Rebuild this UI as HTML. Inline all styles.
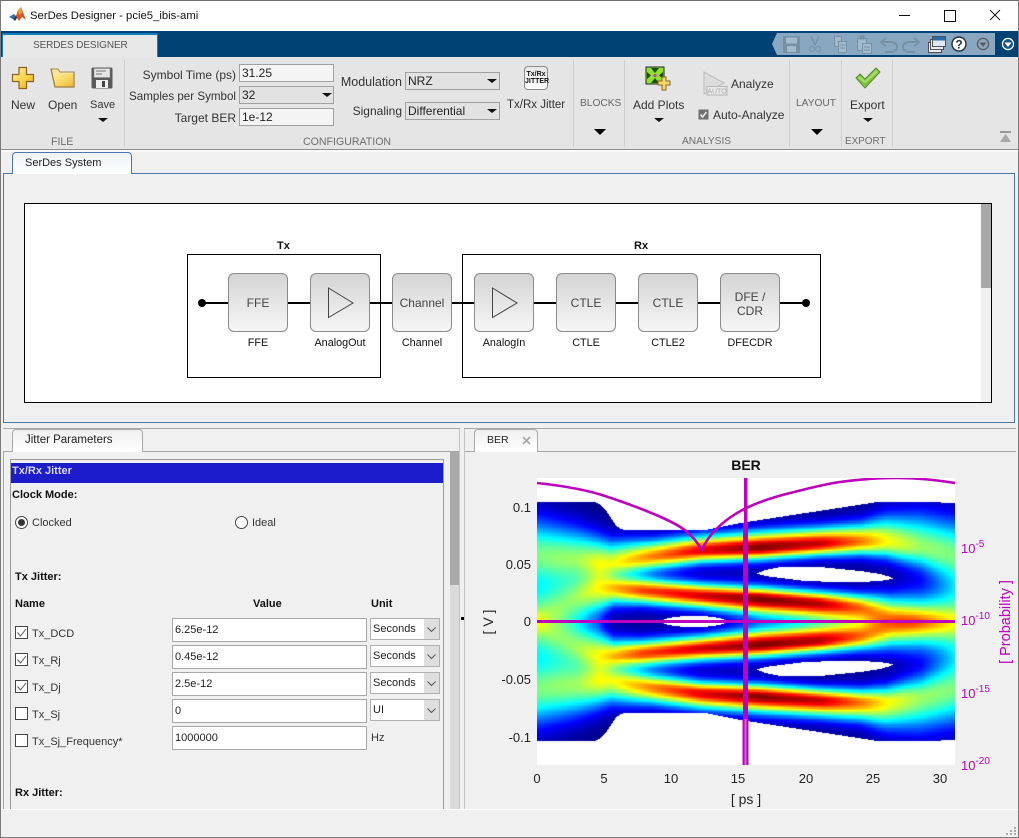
<!DOCTYPE html>
<html><head><meta charset="utf-8"><title>SerDes Designer</title>
<style>
html,body{margin:0;padding:0;background:#f0f0f0}
#w{position:relative;width:1019px;height:838px;overflow:hidden;background:#f0f0f0;font-family:"Liberation Sans",sans-serif;font-size:12px;color:#333}
#w div,#w span.a,#w canvas,#w svg{position:absolute}
.t{position:absolute;white-space:nowrap;line-height:14px}
.r{text-align:right}
.c{text-align:center}
.sep{width:1px;top:60px;height:87px;background:#cfcfcf}
.grp{top:135px;color:#6d6d6d;font-size:10.6px}
.inp{background:#f4f4f4;border:1px solid #a0a0a0;box-sizing:border-box;color:#222;padding-left:2px;line-height:17px}
.cmb{background:#e2e2e2;border:1px solid #a0a0a0;box-sizing:border-box;color:#222;padding-left:2px;line-height:17px}
.ar{width:0;height:0;border-left:5px solid transparent;border-right:5px solid transparent;border-top:4px solid #111}
.ar2{width:0;height:0;border-left:6px solid transparent;border-right:6px solid transparent;border-top:6px solid #000}
.blk{width:60px;height:59px;top:273px;box-sizing:border-box;border:1px solid #8a8a8a;border-radius:6px;background:linear-gradient(#d4d4d4,#f6f6f6);text-align:center;color:#444;font-size:12px;line-height:59px}
.bl{top:336px;width:80px;text-align:center;color:#111;font-size:10.8px}
.fi{left:172px;width:195px;height:24px;background:#fff;border:1px solid #a8a8a8;box-sizing:border-box;font-size:11px;line-height:22px;padding-left:2px;color:#222}
.fs{left:370px;width:70px;height:22px;background:#fff;border:1px solid #b0b0b0;box-sizing:border-box;font-size:11px;line-height:21px;padding-left:2px;color:#222}
.fs i{position:absolute;right:0;top:0;width:15px;height:20px;background:#dedede}
.fs svg{right:3px;top:8px}
.ck{left:15px;width:13px;height:13px;border:1px solid #444;box-sizing:border-box;background:#fff}
.fl{left:32px;font-size:11px;color:#333}
.b{font-weight:bold;font-size:11px;color:#111}
.mag{color:#c000c0;font-size:13px}
.mag sup{font-size:10px;position:relative;top:-6px;vertical-align:baseline;line-height:0;margin-left:0}
.tk{color:#222;font-size:13px}
</style></head><body><div id="w">

<!-- title bar -->
<div style="left:0;top:0;width:1019px;height:31px;background:#fff;border-top:1px solid #6e6e6e;box-sizing:border-box"></div>
<svg style="left:9px;top:7px" width="17" height="16" viewBox="0 0 17 16"><path d="M0 10L5 7 7 9 4 12z" fill="#2a6fa8"/><path d="M4 12L7 9 9 3 12 0 15 8 17 13 13 10 10 14 8 11z" fill="#d9561e"/><path d="M9 3L12 0 13 6 10 8z" fill="#f2a23a"/><path d="M4 12L7 9 8 11 6 14z" fill="#123a5c"/></svg>
<div class="t" style="left:30px;top:9px;font-size:11.3px;color:#111">SerDes Designer - pcie5_ibis-ami</div>
<div style="left:899px;top:15px;width:11px;height:1px;background:#111"></div>
<div style="left:944px;top:10px;width:10px;height:10px;border:1px solid #111"></div>
<svg style="left:989px;top:9px" width="12" height="12"><path d="M1 1L11 11M11 1L1 11" stroke="#111" stroke-width="1" fill="none"/></svg>

<!-- ribbon header -->
<div style="left:1px;top:31px;width:1017px;height:26px;background:#004274"></div>
<div style="left:2px;top:33px;width:156px;height:24px;background:#e8e8e8;border-top:2px solid #0f7dc2;border-left:1px solid #0f7dc2;border-right:1px solid #0f7dc2;box-sizing:border-box;border-radius:2px 2px 0 0"></div>
<div class="t" style="left:33px;top:39px;font-size:10px;letter-spacing:-.1px;color:#555">SERDES DESIGNER</div>
<!-- quick access -->
<svg style="left:770px;top:31px" width="249" height="26" viewBox="0 0 249 26">
<path d="M7 2H225V24H7L2 13z" fill="#8aa7c1"/>
<g fill="none" stroke="#7690a6" stroke-width="1">
<rect x="13.500" y="5.500" width="16" height="16" fill="#7690a6"/><rect x="16" y="6.500" width="11" height="6" fill="#a3b9cc" stroke="none"/><rect x="17" y="15" width="9" height="6" fill="#a3b9cc" stroke="none"/>
<path d="M41 5L45 14M49 5L45 14" stroke-width="1.400"/><circle cx="42" cy="18" r="2.500"/><circle cx="48" cy="18" r="2.500"/>
<rect x="64.500" y="5.500" width="7" height="10" fill="#a3b9cc"/><rect x="68.500" y="10.500" width="8" height="11" fill="#a3b9cc"/><path d="M70 14H75M70 17H75"/>
<rect x="87.500" y="7.500" width="9" height="12" fill="#a3b9cc"/><rect x="90" y="5" width="4" height="3" fill="#7690a6"/><rect x="92.500" y="12.500" width="9" height="10" fill="#a3b9cc"/><path d="M94 16H100M94 19H100"/>
<path d="M116 7L111 11 116 15M112 11H120Q127 11 127 16 127 21 120 21H115" stroke-width="2"/>
<path d="M144 7L149 11 144 15M148 11H140Q133 11 133 16 133 21 140 21H145" stroke-width="2"/>
</g>
</svg>
<svg style="left:924px;top:31px" width="95" height="26" viewBox="0 0 95 26">
<rect x="4.500" y="11.500" width="13" height="10" fill="#e8e8e8" stroke="#333" stroke-width=".8"/>
<rect x="6.500" y="8.500" width="13" height="10" fill="#e8e8e8" stroke="#333" stroke-width=".8"/>
<rect x="8.500" y="5.500" width="13" height="10" fill="#dfe8f2" stroke="#333" stroke-width=".8"/><rect x="9" y="6" width="12" height="3.500" fill="#2b6aa8"/>
<circle cx="35" cy="13" r="7" fill="#fff" stroke="#23303d" stroke-width="1.400"/>
<text x="35" y="17.500" text-anchor="middle" font-family="Liberation Sans" font-weight="bold" font-size="12" fill="#23303d">?</text>
<circle cx="59" cy="13" r="5.600" fill="none" stroke="#5b5b5b" stroke-width="1.300"/><path d="M55.500 11.500H62.500L59 16z" fill="#5b5b5b"/>
<circle cx="84" cy="13" r="5.600" fill="#1b5482" stroke="#fff" stroke-width="1.200"/><path d="M80.500 11.500H87.500L84 16z" fill="#fff"/>
</svg>

<!-- toolstrip -->
<div style="left:1px;top:57px;width:1017px;height:92px;background:#e5e5e5"></div>
<div style="left:0;top:149px;width:1019px;height:1px;background:#8f8f8f"></div>
<div style="left:0;top:150px;width:1019px;height:2px;background:#fafafa"></div>
<div class="sep" style="left:124px"></div><div class="sep" style="left:573px"></div><div class="sep" style="left:624px"></div><div class="sep" style="left:789px"></div><div class="sep" style="left:841px"></div><div class="sep" style="left:892px"></div>

<svg style="left:11px;top:66px" width="24" height="24" viewBox="0 0 24 24"><defs><linearGradient id="yg" x1="0" y1="0" x2="1" y2="1"><stop offset="0" stop-color="#fff0a0"/><stop offset=".6" stop-color="#f7cf45"/><stop offset="1" stop-color="#e0a820"/></linearGradient></defs><path d="M8 1.500H15.500V8.500H22.500V15.500H15.500V22.500H8V15.500H1.500V8.500H8z" fill="url(#yg)" stroke="#8a6420" stroke-width="1.200"/></svg>
<svg style="left:50px;top:68px" width="25" height="20" viewBox="0 0 25 20"><path d="M1 1H8L10 4H24V19H5z" fill="#f4e3a0" stroke="#a88a55"/><path d="M5 19L3 6H23V19z" fill="url(#yg)" opacity=".8"/><path d="M1 1L5 19H24V4" fill="none" stroke="#9a7d45" stroke-width="1.200"/></svg>
<svg style="left:91px;top:67px" width="22" height="22" viewBox="0 0 22 22"><rect x=".5" y=".5" width="21" height="21" rx="1.500" fill="#5a5a5a"/><rect x="3" y="1.500" width="16" height="9" fill="#e6e6e6" stroke="#888" stroke-width=".5"/><path d="M5 4H15M5 7H11" stroke="#777"/><rect x="5" y="13" width="12" height="8" fill="#efefef"/><rect x="11" y="14" width="3" height="6" fill="#444"/></svg>
<div class="t" style="left:11px;top:98px">New</div>
<div class="t" style="left:48px;top:98px">Open</div>
<div class="t" style="left:90px;top:98px;font-size:11px">Save</div>
<div class="ar" style="left:98px;top:118px"></div>
<div class="t grp" style="left:51px">FILE</div>

<div class="t r" style="left:100px;width:136px;top:68px">Symbol Time (ps)</div>
<div class="t r" style="left:100px;width:136px;top:90px;font-size:11.6px">Samples per Symbol</div>
<div class="t r" style="left:100px;width:136px;top:111px">Target BER</div>
<div class="inp" style="left:239px;top:64px;width:95px;height:18px">31.25</div>
<div class="cmb" style="left:239px;top:86px;width:95px;height:18px">32</div><div class="ar" style="left:322px;top:93px"></div>
<div class="inp" style="left:239px;top:108px;width:95px;height:18px">1e-12</div>
<div class="t grp" style="left:303px">CONFIGURATION</div>

<div class="t r" style="left:320px;width:82px;top:75px;font-size:12.5px">Modulation</div>
<div class="t r" style="left:320px;width:82px;top:104px">Signaling</div>
<div class="cmb" style="left:405px;top:72px;width:95px;height:18px">NRZ</div><div class="ar" style="left:487px;top:79px"></div>
<div class="cmb" style="left:405px;top:102px;width:95px;height:18px">Differential</div><div class="ar" style="left:487px;top:109px"></div>
<div style="left:524px;top:66px;width:24px;height:24px;box-sizing:border-box;border:1px solid #8a8a8a;border-radius:4px;background:linear-gradient(#e6e6e6,#fff);text-align:center;font-size:7px;line-height:7px;font-weight:bold;color:#111;padding-top:4px">Tx/Rx<br>JITTER</div>
<div class="t" style="left:507px;top:98px;font-size:11.5px">Tx/Rx Jitter</div>
<div class="t" style="left:580px;top:97px;color:#666;font-size:10.2px">BLOCKS</div>
<div class="ar2" style="left:594px;top:129px"></div>

<svg style="left:645px;top:66px" width="27" height="25" viewBox="0 0 27 25"><rect x="1" y="1" width="18" height="17" fill="#8fe22c" stroke="#222"/><path d="M6 2H14L10 7zM6 17H14L10 12zM2 6V13L6 9.500zM18 6V13L14 9.500z" fill="#1f4a10"/><circle cx="10" cy="9.500" r="1.600" fill="#c040a0"/><path d="M17 11H21V15H25V19H21V24H17V19H13V15H17z" fill="#f7d766" stroke="#8a6420"/></svg>
<div class="t" style="left:633px;top:98px">Add Plots</div>
<div class="ar" style="left:654px;top:118px"></div>
<svg style="left:702px;top:70px" width="27" height="26" viewBox="0 0 27 26"><path d="M2 2L22 13 2 24z" fill="#dcdcdc" stroke="#bdbdbd"/><rect x="5" y="16.500" width="20" height="8.500" fill="#e8e8e8" stroke="#b5b5b5"/><text x="15" y="23.500" text-anchor="middle" font-size="7" font-family="Liberation Sans" fill="#a8a8a8">AUTO</text></svg>
<div class="t" style="left:731px;top:77px">Analyze</div>
<svg style="left:698px;top:109px" width="11" height="11"><rect x=".5" y=".5" width="10" height="10" fill="#6f6f6f"/><path d="M2.500 5.500L4.500 8 8.500 3" stroke="#eee" stroke-width="1.500" fill="none"/></svg>
<div class="t" style="left:713px;top:108px">Auto-Analyze</div>
<div class="t grp" style="left:682px;font-size:10.2px">ANALYSIS</div>
<div class="t" style="left:796px;top:97px;color:#666;font-size:10.2px">LAYOUT</div>
<div class="ar2" style="left:811px;top:129px"></div>
<svg style="left:855px;top:67px" width="26" height="22" viewBox="0 0 26 22"><path d="M1 11L5 7 10 12 21 1 25 5 10 21z" fill="#7fc241" stroke="#5f8a30"/><path d="M3 11L5 9 10 14 21 3 23 5 10 16z" fill="#a8dc6c"/></svg>
<div class="t" style="left:850px;top:98px">Export</div>
<div class="ar" style="left:863px;top:118px"></div>
<div class="t grp" style="left:845px;font-size:9.9px">EXPORT</div>
<svg style="left:1000px;top:131px" width="12" height="12"><path d="M0 1H11" stroke="#999" stroke-width="2"/><path d="M5.500 3L11 11H0z" fill="#a8a8a8"/></svg>

<!-- SerDes system panel -->
<div style="left:3px;top:173px;width:1012px;height:250px;border:1px solid #4a78a8;box-sizing:border-box;background:#f0f0f0"></div>
<div style="left:12px;top:152px;width:120px;height:22px;box-sizing:border-box;border:1px solid #4a78a8;border-bottom:none;border-radius:4px 4px 0 0;background:linear-gradient(#eef3f8,#fff)"></div>
<div class="t" style="left:25px;top:156px;font-size:11px;color:#222">SerDes System</div>
<div style="left:24px;top:203px;width:968px;height:200px;box-sizing:border-box;border:1px solid #000;background:#fff"></div>
<div style="left:981px;top:204px;width:10px;height:198px;background:#f0f0f0"></div>
<div style="left:981px;top:204px;width:10px;height:84px;background:#a8a8a8"></div>

<div style="left:187px;top:254px;width:194px;height:124px;box-sizing:border-box;border:1px solid #000"></div>
<div style="left:462px;top:254px;width:359px;height:124px;box-sizing:border-box;border:1px solid #000"></div>
<div class="t" style="left:277px;top:239px;font-weight:bold;font-size:11px;color:#111">Tx</div>
<div class="t" style="left:634px;top:239px;font-weight:bold;font-size:11px;color:#111">Rx</div>
<div style="left:201px;top:302px;width:605px;height:2px;background:#000"></div>
<div style="left:198px;top:299px;width:8px;height:8px;border-radius:50%;background:#000"></div>
<div style="left:802px;top:299px;width:8px;height:8px;border-radius:50%;background:#000"></div>
<div class="blk" style="left:228px">FFE</div>
<div class="blk" style="left:310px"></div>
<div class="blk" style="left:392px">Channel</div>
<div class="blk" style="left:474px"></div>
<div class="blk" style="left:556px">CTLE</div>
<div class="blk" style="left:638px">CTLE</div>
<div class="blk" style="left:720px;line-height:14px;padding-top:16px">DFE /<br>CDR</div>
<svg style="left:320px;top:283px" width="210" height="40"><path d="M8.500 5L33 20 8.500 34.500z M172.500 5L197 20 172.500 34.500z" fill="none" stroke="#444" stroke-width="1"/></svg>
<div class="t bl" style="left:218px">FFE</div>
<div class="t bl" style="left:300px">AnalogOut</div>
<div class="t bl" style="left:382px">Channel</div>
<div class="t bl" style="left:464px">AnalogIn</div>
<div class="t bl" style="left:546px">CTLE</div>
<div class="t bl" style="left:628px">CTLE2</div>
<div class="t bl" style="left:710px">DFECDR</div>

<!-- lower-left panel -->
<div style="left:3px;top:428px;width:457px;height:1px;background:#a8a8a8"></div>
<div style="left:3px;top:451px;width:457px;height:1px;background:#a8a8a8"></div>
<div style="left:3px;top:451px;width:1px;height:358px;background:#a8a8a8"></div>
<div style="left:459px;top:429px;width:1px;height:380px;background:#c4c4c4"></div>
<div style="left:12px;top:429px;width:131px;height:23px;box-sizing:border-box;border:1px solid #a8a8a8;border-bottom:none;border-radius:4px 4px 0 0;background:linear-gradient(#f0f0f0,#fff)"></div>
<div class="t" style="left:25px;top:433px;font-size:11.5px;color:#222">Jitter Parameters</div>
<div style="left:10px;top:459px;width:434px;height:350px;box-sizing:border-box;border:1px solid #9a9a9a;border-bottom:none"></div>
<div style="left:11px;top:463px;width:432px;height:20px;background:#1c1ccb"></div>
<div class="t" style="left:12px;top:464px;color:#d8d8f0;font-weight:bold;font-size:11px">Tx/Rx Jitter</div>
<div style="left:450px;top:451px;width:9px;height:358px;background:#dadada"></div>
<div style="left:450px;top:451px;width:9px;height:134px;background:#a9a9a9"></div>
<div style="left:461px;top:617px;width:3px;height:3px;background:#000"></div>

<div class="t b" style="left:12px;top:488px">Clock Mode:</div>
<div style="left:15px;top:516px;width:13px;height:13px;box-sizing:border-box;border:1px solid #444;border-radius:50%;background:#fff"></div>
<div style="left:18px;top:519px;width:7px;height:7px;border-radius:50%;background:#333"></div>
<div class="t" style="left:32px;top:516px;font-size:11px;color:#333">Clocked</div>
<div style="left:235px;top:516px;width:13px;height:13px;box-sizing:border-box;border:1px solid #444;border-radius:50%;background:#fff"></div>
<div class="t" style="left:252px;top:516px;font-size:11px;color:#333">Ideal</div>
<div class="t b" style="left:15px;top:570px">Tx Jitter:</div>
<div class="t b" style="left:15px;top:597px">Name</div>
<div class="t b" style="left:253px;top:597px">Value</div>
<div class="t b" style="left:371px;top:597px">Unit</div>

<div class="fi" style="top:618px">6.25e-12</div>
<div class="fi" style="top:645px">0.45e-12</div>
<div class="fi" style="top:672px">2.5e-12</div>
<div class="fi" style="top:699px">0</div>
<div class="fi" style="top:726px">1000000</div>
<div class="fs" style="top:618px">Seconds<i></i><svg width="9" height="6"><path d="M.5 .5L4.500 4.500 8.500 .5" fill="none" stroke="#555"/></svg></div>
<div class="fs" style="top:645px">Seconds<i></i><svg width="9" height="6"><path d="M.5 .5L4.500 4.500 8.500 .5" fill="none" stroke="#555"/></svg></div>
<div class="fs" style="top:672px">Seconds<i></i><svg width="9" height="6"><path d="M.5 .5L4.500 4.500 8.500 .5" fill="none" stroke="#555"/></svg></div>
<div class="fs" style="top:699px">UI<i></i><svg width="9" height="6"><path d="M.5 .5L4.500 4.500 8.500 .5" fill="none" stroke="#555"/></svg></div>
<div class="t" style="left:371px;top:731px;font-size:11px;color:#333">Hz</div>

<div class="ck" style="top:626px"></div><div class="ck" style="top:653px"></div><div class="ck" style="top:680px"></div><div class="ck" style="top:707px"></div><div class="ck" style="top:734px"></div>
<svg style="left:15px;top:626px" width="13" height="70"><path d="M2.500 6.500L5.500 10 11 3M2.500 33.500L5.500 37 11 30M2.500 60.500L5.500 64 11 57" fill="none" stroke="#555" stroke-width="1"/></svg>
<div class="t fl" style="top:627px">Tx_DCD</div>
<div class="t fl" style="top:654px">Tx_Rj</div>
<div class="t fl" style="top:681px">Tx_Dj</div>
<div class="t fl" style="top:708px">Tx_Sj</div>
<div class="t fl" style="top:735px">Tx_Sj_Frequency*</div>
<div class="t b" style="left:15px;top:786px">Rx Jitter:</div>

<!-- lower-right panel -->
<div style="left:464px;top:428px;width:552px;height:1px;background:#a8a8a8"></div>
<div style="left:464px;top:451px;width:552px;height:1px;background:#a8a8a8"></div>
<div style="left:464px;top:429px;width:1px;height:380px;background:#c4c4c4"></div>
<div style="left:474px;top:429px;width:64px;height:23px;box-sizing:border-box;border:1px solid #a8a8a8;border-bottom:none;border-radius:4px 4px 0 0;background:linear-gradient(#f0f0f0,#fff)"></div>
<div class="t" style="left:487px;top:433px;font-size:10.5px;color:#222">BER</div>
<svg style="left:522px;top:436px" width="9" height="9"><path d="M1 1L8 8M8 1L1 8" stroke="#aaa" stroke-width="1.800"/></svg>

<div class="t" style="left:726px;top:458px;width:40px;text-align:center;font-weight:bold;font-size:14px;color:#111">BER</div>
<canvas id="cv" width="418" height="287" style="left:537px;top:478px;background:#fff"></canvas>
<svg style="left:537px;top:478px" width="418" height="287" viewBox="537 478 418 287">
<path d="M537 483 C565 486 590 491 605 496 S645 510 663 518 S692 533 702 550 C708 535 722 522 737 513 S770 498 790 493 S825 484 840 482 S875 478 897 478 S935 480 955 483" fill="none" stroke="#bf00bf" stroke-width="2.600"/>
<rect x="744" y="478" width="3.500" height="45" fill="#bf00bf"/>
<rect x="743" y="523" width="5" height="196" fill="#bf00bf"/>
<rect x="742.500" y="719" width="6" height="46" fill="#bf00bf"/>
<rect x="744.500" y="719" width="2" height="46" fill="#d860d8"/>
<rect x="537" y="620" width="418" height="3" fill="#bf00bf"/>
</svg>
<div class="t tk r" style="left:490px;width:41px;top:501px">0.1</div>
<div class="t tk r" style="left:490px;width:41px;top:558px">0.05</div>
<div class="t tk r" style="left:490px;width:41px;top:615px">0</div>
<div class="t tk r" style="left:490px;width:41px;top:673px">-0.05</div>
<div class="t tk r" style="left:490px;width:41px;top:731px">-0.1</div>
<div class="t tk c" style="left:517px;width:40px;top:772px">0</div>
<div class="t tk c" style="left:584px;width:40px;top:772px">5</div>
<div class="t tk c" style="left:651px;width:40px;top:772px">10</div>
<div class="t tk c" style="left:718px;width:40px;top:772px">15</div>
<div class="t tk c" style="left:786px;width:40px;top:772px">20</div>
<div class="t tk c" style="left:853px;width:40px;top:772px">25</div>
<div class="t tk c" style="left:920px;width:40px;top:772px">30</div>
<div class="t tk c" style="left:716px;width:60px;top:792px;font-size:14px">[ ps ]</div>
<div class="t tk c" style="left:458px;width:60px;top:615px;font-size:14px;transform:rotate(-90deg)">[ V ]</div>
<div class="t mag" style="left:961px;top:542px">10<sup>-5</sup></div>
<div class="t mag" style="left:961px;top:614px">10<sup>-10</sup></div>
<div class="t mag" style="left:961px;top:687px">10<sup>-15</sup></div>
<div class="t mag" style="left:961px;top:759px">10<sup>-20</sup></div>
<div class="t mag c" style="left:956px;width:100px;top:615px;font-size:14.500px;transform:rotate(-90deg)">[ Probability ]</div>

<!-- status bar -->
<div style="left:0;top:809px;width:1019px;height:1px;background:#fff"></div>
<div style="left:0;top:837px;width:1019px;height:1px;background:#7a7a7a"></div>
<div style="left:0;top:0;width:1px;height:838px;background:#7a7a7a"></div>
<div style="left:1018px;top:0;width:1px;height:838px;background:#7a7a7a"></div>
<svg style="left:1006px;top:826px" width="11" height="10"><g fill="#aaa"><rect x="8" y="1" width="2" height="2"/><rect x="4" y="4" width="2" height="2"/><rect x="8" y="4" width="2" height="2"/><rect x="0" y="7" width="2" height="2"/><rect x="4" y="7" width="2" height="2"/><rect x="8" y="7" width="2" height="2"/></g></svg>
</div>
<script>
(function(){
var R1=[[537,554,.48,24,22],[575,557,.50,20,17],[610,562,.58,15,10],[650,556,.74,11,9],[700,550,.90,10,8],[760,547,1,10.5,8],[820,543,.93,10.5,8],[860,541,.76,12,9],[885,541,.63,17,11],[920,546,.52,22,15],[955,554,.48,24,22]];
var R2=[[537,612,.38,20,13],[560,604,.42,18,16],[575,598,.46,15,17],[597,590,.56,13,16],[612,588,.66,9,11],[640,590,.80,8.5,9],[700,595,.92,8,8.5],[760,598.5,1,8,10.5],[820,603,.93,8,10.5],[860,607,.74,9,10.5],[890,613,.53,13,11],[920,617,.42,18,12],[955,612,.38,20,13]];
var TOP=[[537,502],[595,502],[600,505],[605,510],[610,517],[615,525],[620,529],[625,530],[705,530],[720,527],[740,523],[877,502],[925,502],[955,503]];
var HT=[[757,573],[765,570],[780,567],[820,567],[840,569],[860,571],[880,574],[890,577],[892,578]];
var HB=[[757,574],[765,576],[780,578],[800,580.5],[830,582],[860,582],[880,581],[892,579]];
function ip(t,x){var n=t.length,i;if(x<=t[0][0])return t[0].slice(1);for(i=1;i<n;i++){if(x<=t[i][0]){var a=t[i-1],b=t[i],f=(x-a[0])/(b[0]-a[0]),o=[];for(var k=1;k<a.length;k++)o.push(a[k]+(b[k]-a[k])*f);return o;}}return t[n-1].slice(1);}
function g(r,y){var d=y-r[0],s=d<0?r[2]:r[3];return r[1]*(.92*Math.exp(-d*d/(2*s*s))+.08*Math.exp(-d*d/(8*s*s)));}
function cl(v){return v<0?0:v>1?1:v;}
var c=document.getElementById('cv').getContext('2d'),im=c.createImageData(418,287),D=im.data;
for(var px=0;px<418;px++){
 var X=537+Math.floor(px/1.3)*1.3;
 var a=ip(R1,X),b=ip(R2,X),tp=ip(TOP,537+px)[0];
 var ht=(537+px>=757&&537+px<=892)?ip(HT,537+px)[0]:1e9,hb=(537+px>=757&&537+px<=892)?ip(HB,537+px)[0]:-1e9;
 var lh=0,u=(537+px-693.5)/32.5;if(Math.abs(u)<1)lh=5.5*Math.sqrt(1-u*u);
 for(var py=0;py<287;py++){
  var Yr=478+py+.5,mr=1243-Yr,up=Math.min(Yr,mr),Y=478+Math.floor(py/1.3)*1.3+.5,m=1243-Y;
  var i=(py*418+px)*4,white=up<tp||(up>ht&&up<hb)||(Math.abs(Yr-621.5)<lh);
  if(white){D[i]=D[i+1]=D[i+2]=255;D[i+3]=255;continue;}
  var v=Math.min(1,g(a,Y)+g(a,m)+g(b,Y)+g(b,m));
  D[i]=255*cl(1.5-Math.abs(4*v-3));D[i+1]=255*cl(1.5-Math.abs(4*v-2));D[i+2]=255*cl(1.5-Math.abs(4*v-1));D[i+3]=255;
 }
}
c.putImageData(im,0,0);
})();
</script>
</body></html>
